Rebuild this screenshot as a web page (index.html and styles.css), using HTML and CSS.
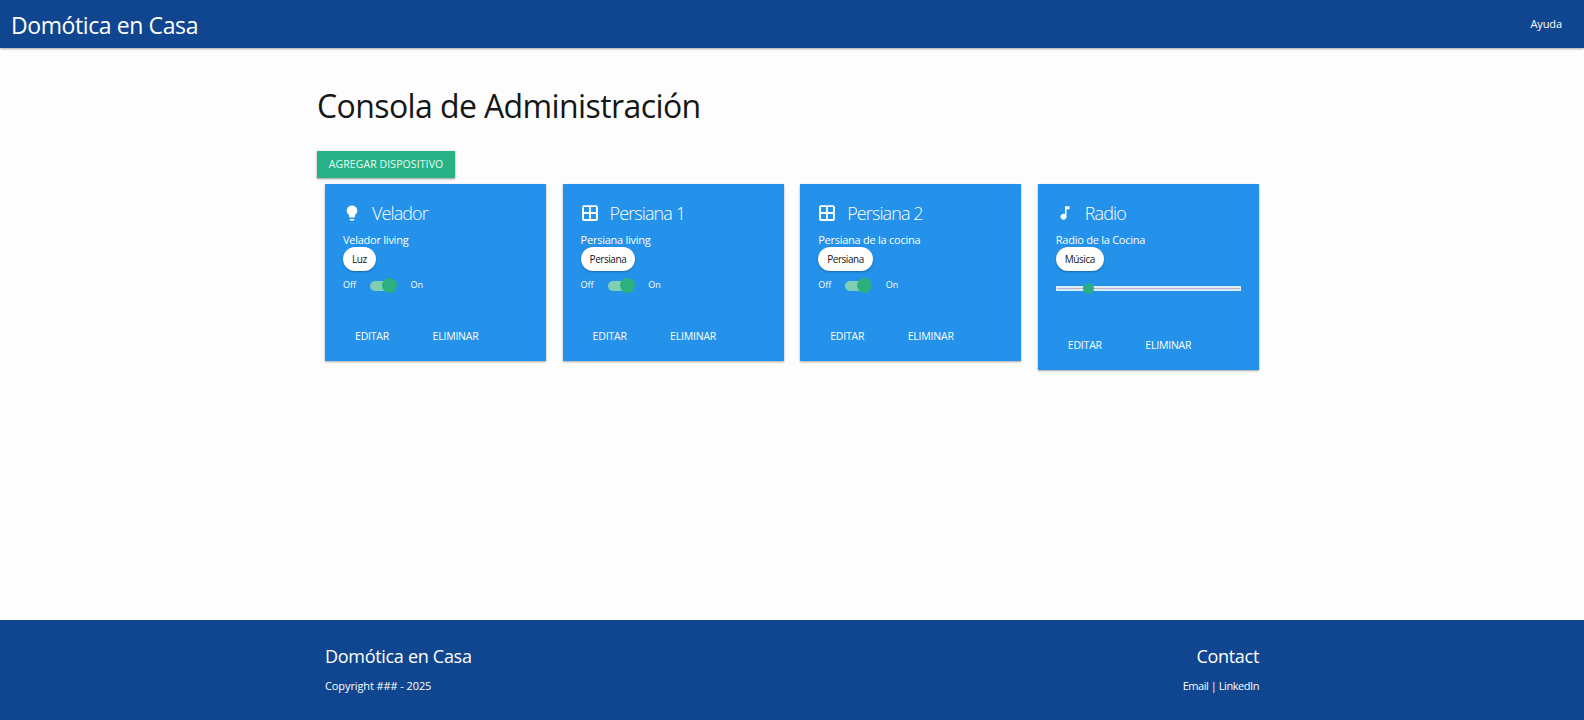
FILE: index.html
```html
<!DOCTYPE html>
<html lang="es">
<head>
<meta charset="utf-8">
<title>Domótica en Casa</title>
<link rel="stylesheet" href="styles.css">
</head>
<body>
<nav class="nav"><a class="brand"><span>Domótica en Casa</span></a><a class="help">Ayuda</a></nav>
<main class="container">
  <h1 class="title"><span>Consola de Administración</span></h1>
  <button class="btn"><span>AGREGAR DISPOSITIVO</span></button>
  <div class="row">
    <section class="card">
      <div class="card-head"><svg class="icon" viewBox="0 0 24 24"><path d="M9 21c0 .5.4 1 1 1h4c.6 0 1-.5 1-1v-1H9v1zm3-19C8.100 2 5 5.100 5 9c0 2.400 1.200 4.500 3 5.700V17c0 .5.4 1 1 1h6c.6 0 1-.5 1-1v-2.300c1.800-1.300 3-3.400 3-5.700 0-3.900-3.100-7-7-7z"/></svg><h2><span>Velador</span></h2></div>
      <p class="desc"><span>Velador living</span></p>
      <div class="chip">Luz</div>
      <div class="switch"><span>Off</span><i class="lever"></i><span>On</span></div>
      <div class="actions"><a class="edit">EDITAR</a><a>ELIMINAR</a></div>
    </section>
    <section class="card">
      <div class="card-head"><svg class="icon" viewBox="0 0 24 24"><path fill-rule="evenodd" d="M4 1.500h16a2.500 2.500 0 0 1 2.500 2.500v16a2.500 2.500 0 0 1-2.500 2.500H4A2.500 2.500 0 0 1 1.500 20V4A2.500 2.500 0 0 1 4 1.500zM4 4v6.800h6.800V4zm9.200 0v6.800H20V4zM4 13.200V20h6.800v-6.800zm9.200 0V20H20v-6.800z"/></svg><h2><span>Persiana 1</span></h2></div>
      <p class="desc"><span>Persiana living</span></p>
      <div class="chip">Persiana</div>
      <div class="switch"><span>Off</span><i class="lever"></i><span>On</span></div>
      <div class="actions"><a class="edit">EDITAR</a><a>ELIMINAR</a></div>
    </section>
    <section class="card">
      <div class="card-head"><svg class="icon" viewBox="0 0 24 24"><path fill-rule="evenodd" d="M4 1.500h16a2.500 2.500 0 0 1 2.500 2.500v16a2.500 2.500 0 0 1-2.500 2.500H4A2.500 2.500 0 0 1 1.500 20V4A2.500 2.500 0 0 1 4 1.500zM4 4v6.800h6.800V4zm9.200 0v6.800H20V4zM4 13.200V20h6.800v-6.800zm9.200 0V20H20v-6.800z"/></svg><h2><span>Persiana 2</span></h2></div>
      <p class="desc"><span>Persiana de la cocina</span></p>
      <div class="chip">Persiana</div>
      <div class="switch"><span>Off</span><i class="lever"></i><span>On</span></div>
      <div class="actions"><a class="edit">EDITAR</a><a>ELIMINAR</a></div>
    </section>
    <section class="card card-tall">
      <div class="card-head"><svg class="icon" viewBox="0 0 24 24"><path d="M12 3v10.550c-.59-.34-1.270-.55-2-.55-2.210 0-4 1.790-4 4s1.790 4 4 4 4-1.790 4-4V7h4V3h-6z"/></svg><h2><span>Radio</span></h2></div>
      <p class="desc"><span>Radio de la Cocina</span></p>
      <div class="chip">Música</div>
      <div class="slider"><i class="knob"></i></div>
      <div class="actions"><a class="edit">EDITAR</a><a>ELIMINAR</a></div>
    </section>
  </div>
</main>
<footer class="footer">
  <div class="footer-inner">
    <div><h5>Domótica en Casa</h5><p>Copyright ### - 2025</p></div>
    <div class="right"><h5>Contact</h5><p class="links">Email | LinkedIn</p></div>
  </div>
</footer>
</body>
</html>
```
FILE: styles.css
```css
* { box-sizing: border-box; margin: 0; padding: 0; }
body {
  height: 720px;
  display: flex;
  flex-direction: column;
  overflow: hidden;
  background: #fdfdfd;
  font: 400 11px/16px "Open Sans", "Noto Sans", sans-serif;
  color: #fff;
  white-space: nowrap;
}
h1, h2, h5 { font-weight: 400; }
.nav {
  height: 48px;
  flex: none;
  display: flex;
  justify-content: space-between;
  line-height: 48px;
  padding: 0 22px 0 11px;
  background: #10468f;
  box-shadow: 0 1px 2px rgba(0,0,0,.35);
}
.brand { font-size: 23px; letter-spacing: -.4px; padding-top: 1px; }
.help { font-size: 11px; letter-spacing: -.1px; }
.container { width: 950px; margin-left: 317px; flex: 1; }
.title {
  font-size: 32px;
  line-height: 40px;
  margin-top: 38px;
  letter-spacing: -.6px;
  color: #161616;
}
.btn {
  display: flex;
  align-items: center;
  justify-content: center;
  width: 138px;
  height: 27px;
  margin-top: 25px;
  border: 0;
  background: #27b184;
  color: #e6fff5;
  font: 400 10.500px/27px "Open Sans", sans-serif;
  letter-spacing: .1px;
  box-shadow: 0 1px 2px rgba(0,0,0,.4);
}
.row {
  display: grid;
  grid-template-columns: repeat(4, 221px);
  column-gap: 16.600px;
  align-items: start;
  margin: 6px 0 0 8px;
}
.card {
  height: 177px;
  padding: 18px;
  background: #2492ea;
  box-shadow: 0 1px 2px rgba(0,0,0,.35);
}
.card-tall { height: 186px; }
.card-head { display: flex; align-items: center; gap: 11px; height: 24px; }
.icon { width: 18px; height: 18px; fill: #fff; margin-top: -2px; }
.card h2 { font-size: 18px; line-height: 24px; font-weight: 300; letter-spacing: -.9px; margin-top: -2px; }
.desc { margin-top: 6px; line-height: 16px; font-size: 11px; letter-spacing: -.25px; }
.chip {
  width: max-content;
  height: 24px;
  margin-top: -1px;
  padding: 0 9px;
  border-radius: 12px;
  background: #fff;
  color: #161616;
  font-size: 10px;
  line-height: 24px;
  font-weight: 500;
  letter-spacing: -.45px;
  box-shadow: 0 1px 2px rgba(0,0,0,.3);
}
.switch { display: flex; align-items: center; height: 14px; margin-top: 7px; font-size: 9px; }
.lever {
  position: relative;
  width: 24px;
  height: 10px;
  margin: 1px 16.500px 0 14px;
  border-radius: 5px;
  background: #7fcfb4;
}
.lever::after {
  content: "";
  position: absolute;
  left: 12px;
  top: -3px;
  width: 15px;
  height: 15px;
  border-radius: 50%;
  background: #2bb07e;
}
.actions { display: flex; margin: 36px 0 0 12px; line-height: 16px; font-size: 10.500px; letter-spacing: -.2px; }
.edit { width: 77.500px; }
.slider {
  position: relative;
  height: 5px;
  margin-top: 15px;
  background: #b9b4cc;
  border: solid #dcecfa;
  border-width: 2px 1px;
}
.knob {
  position: absolute;
  left: 26px;
  top: -5px;
  width: 11px;
  height: 11px;
  border-radius: 50%;
  background: #27ae88;
}
.card-tall .actions { margin-top: 46px; }
.footer { height: 100px; flex: none; background: #10468f; }
.footer-inner { display: flex; justify-content: space-between; margin-left: 325px; width: 934px; padding-top: 23px; }
.footer h5 { font-size: 18px; line-height: 26px; letter-spacing: -.3px; }
.footer p { font-size: 11px; line-height: 16px; margin-top: 9px; letter-spacing: -.1px; }
.right { text-align: right; }
.footer .links { letter-spacing: -.45px; }
```
